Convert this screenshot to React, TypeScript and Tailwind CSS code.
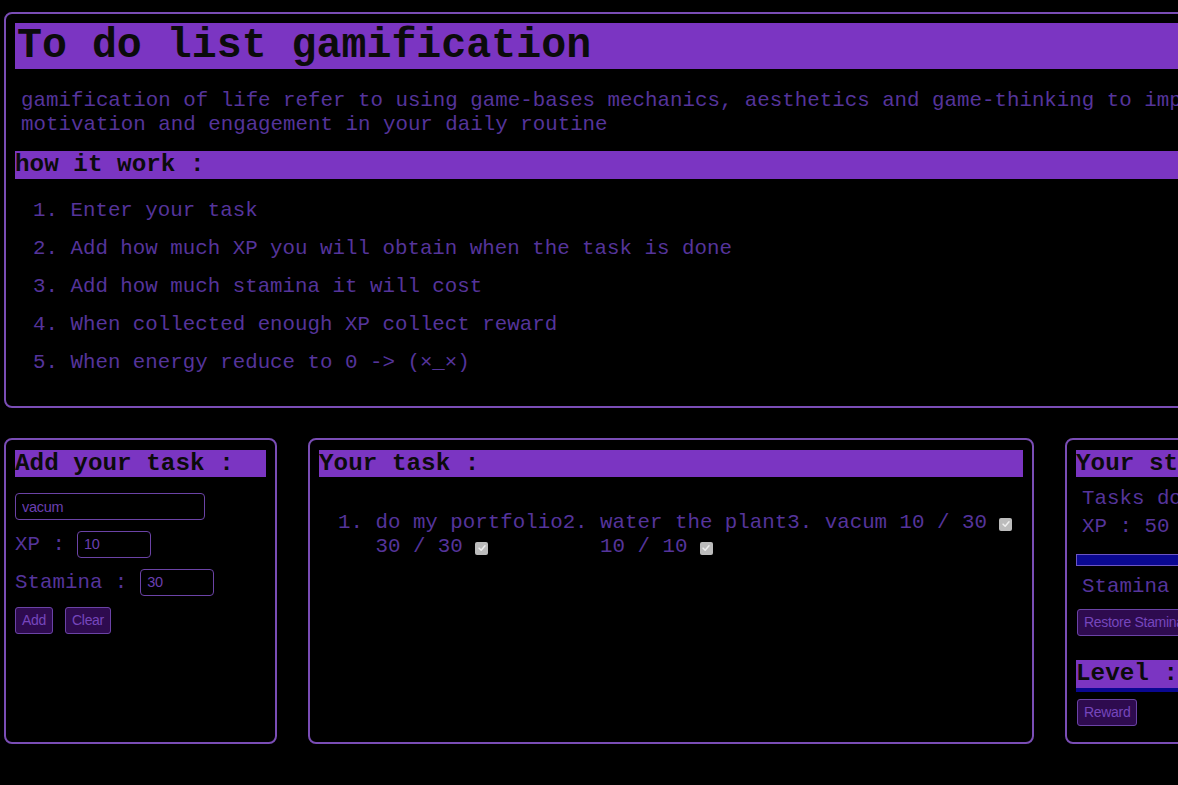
const mono = "font-['Courier_New','Liberation_Mono',monospace]"

function Check() {
  return (
    <span className="inline-flex h-[13px] w-[13px] items-center justify-center rounded-[2px] bg-[#bcbcbc] align-[-1px]">
      <svg viewBox="0 0 12 12" className="h-[10px] w-[10px]">
        <path d="M2.5 6.2 L5 8.6 L9.6 3.4" fill="none" stroke="#efefef" strokeWidth="1.8" strokeLinecap="round" strokeLinejoin="round" />
      </svg>
    </span>
  )
}

function Bar({ children, className = "" }: { children: React.ReactNode; className?: string }) {
  return (
    <h3 className={`bg-[#7b35c2] text-[24.3px] font-bold leading-[27px] text-[#0b0b0b] ${className}`}>{children}</h3>
  )
}

const inputCls =
  "block h-[27px] rounded-[4px] border border-[#6b43a6] bg-black px-[6px] font-['Liberation_Sans',Arial,sans-serif] text-[14.5px] tracking-[-0.3px] text-[#6a3fb0] outline-none"
const btnCls =
  "block h-[27px] rounded-[3px] border border-[#6b43a6] bg-[#2e0b4f] px-[6px] font-['Liberation_Sans',Arial,sans-serif] text-[14px] tracking-[-0.3px] text-[#7646bd]"

const steps = [
  "Enter your task",
  "Add how much XP you will obtain when the task is done",
  "Add how much stamina it will cost",
  "When collected enough XP collect reward",
  "When energy reduce to 0 -> (×_×)",
]

const tasks = [
  { name: "do my portfolio", done: "30 / 30", w: "w-[15ch]" },
  { name: "water the plant", done: "10 / 10", w: "w-[15ch]" },
  { name: "vacum", done: "10 / 30", w: "" },
]

export default function App() {
  return (
    <div className={`h-screen w-screen overflow-hidden bg-black ${mono} text-[20.8px] text-[#55349b]`}>
      <div className="w-[1350px] pl-[4px] pt-[12px]">
        {/* intro */}
        <section className="h-[396px] w-[1334px] rounded-[8px] border-2 border-[#7a4db5] p-[9px]">
          <h1 className="h-[46px] bg-[#7b35c2] pl-[2px] text-[41.6px] font-bold leading-[46px] text-[#0b0b0b]">
            To do list gamification
          </h1>
          <p className="mt-[20px] pl-[6px] leading-[23.5px]">
            gamification of life refer to using game-bases mechanics, aesthetics and game-thinking to improve
            motivation and engagement in your daily routine
          </p>
          <Bar className="mt-[15px] h-[28px] leading-[28px]">how it work :</Bar>
          <ol className="mt-[13px] pl-[18px]">
            {steps.map((s, i) => (
              <li key={i} className="flex py-[7px] leading-[24px]">
                <span className="w-[3ch] shrink-0">{i + 1}.</span>
                <span>{s}</span>
              </li>
            ))}
          </ol>
        </section>

        <div className="mt-[30px] flex gap-[31px]">
          {/* add task */}
          <section className="h-[306px] w-[273px] shrink-0 rounded-[8px] border-2 border-[#7a4db5] px-[9px] pt-[10px]">
            <Bar>Add your task :</Bar>
            <input className={`${inputCls} mt-[16px] w-[190px]`} defaultValue="vacum" />
            <div className="mt-[11px] flex h-[27px] items-center gap-[12px] leading-[27px]">
              <span>XP :</span>
              <input className={`${inputCls} w-[74px]`} defaultValue="10" />
            </div>
            <div className="mt-[11px] flex h-[27px] items-center gap-[13px] leading-[27px]">
              <span>Stamina :</span>
              <input className={`${inputCls} w-[74px]`} defaultValue="30" />
            </div>
            <div className="mt-[11px] flex gap-[12px]">
              <button className={btnCls}>Add</button>
              <button className={btnCls}>Clear</button>
            </div>
          </section>

          {/* task list */}
          <section className="h-[306px] w-[726px] shrink-0 rounded-[8px] border-2 border-[#7a4db5] px-[9px] pt-[10px]">
            <Bar>Your task :</Bar>
            <ol className="mt-[34px] flex pl-[19px] leading-[24px]">
              {tasks.map((t, i) => (
                <li key={i} className="flex">
                  <span className="w-[3ch] shrink-0">{i + 1}.</span>
                  <span className={t.w}>
                    {t.name} <span className="whitespace-nowrap">{t.done} <Check /></span>
                  </span>
                </li>
              ))}
            </ol>
          </section>

          {/* stats */}
          <section className="h-[306px] w-[273px] shrink-0 rounded-[8px] border-2 border-[#7a4db5] px-[9px] pt-[10px]">
            <Bar className="whitespace-nowrap">Your stats :</Bar>
            <p className="mt-[10px] whitespace-nowrap pl-[6px] leading-[24px]">Tasks done : 3</p>
            <p className="mt-[4px] whitespace-nowrap pl-[6px] leading-[24px]">XP : 50 / 100</p>
            <div className="mt-[15px] h-[12px] w-full border border-[#6b55c4] bg-[#0a0891]" />
            <p className="mt-[9px] whitespace-nowrap pl-[6px] leading-[24px]">Stamina : 40</p>
            <button className={`${btnCls} mt-[10px] ml-[1px] whitespace-nowrap`}>Restore Stamina</button>
            <Bar className="mt-[24px] h-[32px] border-b-4 border-[#0a0891] leading-[28px]">Level : 1</Bar>
            <button className={`${btnCls} mt-[7px] ml-[1px]`}>Reward</button>
          </section>
        </div>
      </div>
    </div>
  )
}
